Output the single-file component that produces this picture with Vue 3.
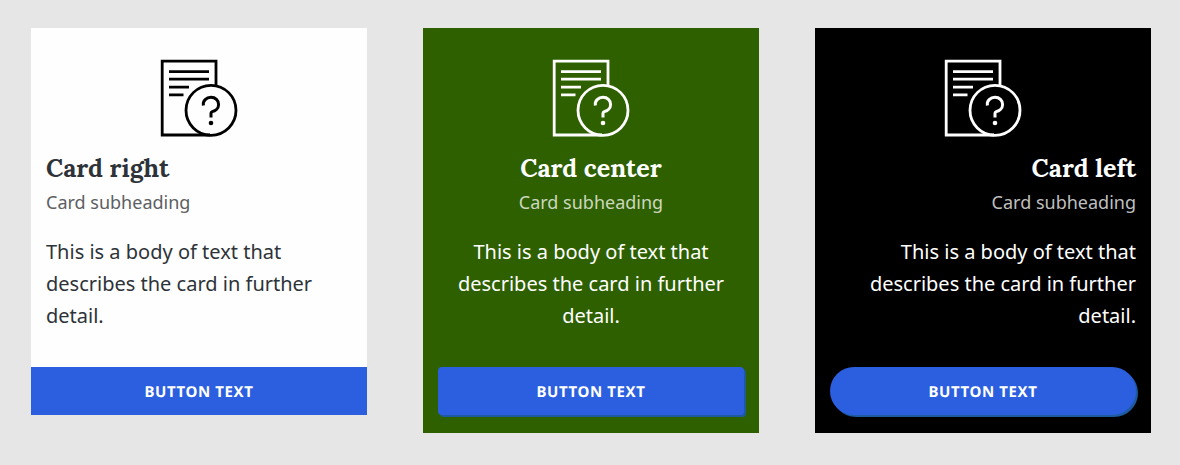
<script setup>
const cards = [
  { id: 'right', title: 'Card right' },
  { id: 'center', title: 'Card center' },
  { id: 'left', title: 'Card left' },
]
</script>

<template>
  <main class="page">
    <article v-for="card in cards" :key="card.id" class="card" :class="card.id">
      <svg class="icon" viewBox="0 0 80 80" fill="none" stroke="currentColor" stroke-width="2.8">
        <path d="M51 76H3.2V2.1H57V28" />
        <path d="M10 12.6H50M10 20.2H50M10 28.1H30M10 35.9H24.5" />
        <circle cx="52" cy="51.3" r="25" />
        <path d="M44.4 46.4C43.6 41.8 47.4 38.3 52 38.3C56.4 38.3 59.6 41.4 59.6 45.5C59.6 49.6 56 52 53.2 52.6Q52 53 52 54.2V58.6" stroke-width="3" />
        <circle cx="52" cy="64" r="2.3" fill="currentColor" stroke="none" />
      </svg>
      <h2 class="title">{{ card.title }}</h2>
      <p class="subheading">Card subheading</p>
      <p class="body">This is a body of text that describes the card in further detail.</p>
      <button class="button" type="button">Button text</button>
    </article>
  </main>
</template>

<style>
body {
  background: #e6e6e6;
}
</style>

<style scoped>
.page {
  box-sizing: border-box;
  height: 465px;
  padding: 28px 29px 0 31px;
  display: flex;
  align-items: flex-start;
  gap: 56px;
  background: #e6e6e6;
  font-family: "Noto Sans", sans-serif;
}
.card {
  box-sizing: border-box;
  width: 336px;
  flex: none;
  padding: 31px 15px 18px;
  display: flex;
  flex-direction: column;
  color: #fff;
}
.icon {
  width: 80px;
  height: 80px;
  align-self: center;
}
.title {
  margin: 9px 0 0;
  font: bold 25px/40px "Lora", "Liberation Serif", serif;
}
.subheading {
  margin: 0;
  font-size: 18px;
  line-height: 29px;
}
.body {
  margin: 19px 0 35px;
  font-size: 20px;
  line-height: 32px;
}
.button {
  box-sizing: border-box;
  height: 48px;
  width: 306px;
  border: 0;
  padding: 2px 0 0;
  background: #2c5fe0;
  color: #fff;
  font: bold 15px/24px "Noto Sans", sans-serif;
  letter-spacing: 0.6px;
  text-rendering: geometricPrecision;
  text-transform: uppercase;
  box-shadow: 2px 2px 0 #1d5aa0;
}
.right {
  padding-bottom: 0;
  background: #fefefe;
  color: #2d3338;
}
.right .icon {
  color: #000;
}
.right .subheading {
  color: #5c6063;
}
.right .button {
  width: 336px;
  margin: 0 -15px;
  box-shadow: none;
}
.center {
  background: #2e6000;
  text-align: center;
}
.center .subheading {
  color: #cbd7bf;
}
.center .button {
  border-radius: 4px;
}
.left {
  background: #000;
  text-align: right;
}
.left .subheading {
  color: #bfbfbf;
}
.left .button {
  border-radius: 24px;
}
</style>
